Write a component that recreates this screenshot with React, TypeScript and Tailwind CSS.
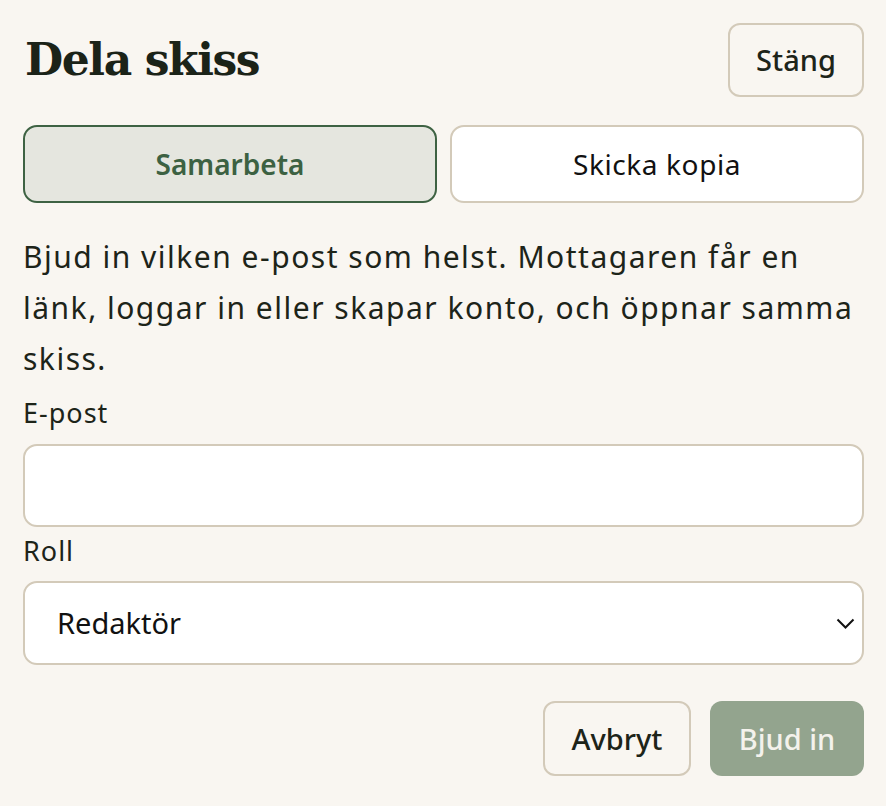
import React from "react";

export default function App() {
  const sans = "font-['Noto_Sans','Liberation_Sans',sans-serif]";
  return (
    <div className={`min-h-screen w-full bg-[#f9f6f1] text-[#1d2419] ${sans}`}>
      <div className="px-[23px] pr-[22px] pt-[23px]">
        <div className="flex items-center justify-between">
          <h1 className="pl-[2px] font-['DejaVu_Serif','Liberation_Serif',serif] text-[44px] font-bold tracking-[-1.4px] text-[#1b2318]">
            Dela skiss
          </h1>
          <button className="h-[74px] w-[136px] rounded-[12px] border-2 border-[#d3cab9] text-[29px] font-medium text-[#1d2419]">
            Stäng
          </button>
        </div>

        <div className="mt-[28px] grid grid-cols-2 gap-[13px]">
          <button className="h-[78px] rounded-[14px] border-2 border-[#3e6243] bg-[#e5e6df] text-[28px] font-semibold text-[#3c6142]">
            Samarbeta
          </button>
          <button className="h-[78px] rounded-[14px] border-2 border-[#d3cab9] bg-white text-[28px] tracking-[0.6px] text-[#111]">
            Skicka kopia
          </button>
        </div>

        <p className="mt-[28px] text-[30px] leading-[51px] tracking-[1.5px] text-[#1d2419]">
          Bjud in vilken e-post som helst. Mottagaren får en
          <br />
          länk, loggar in eller skapar konto, och öppnar samma
          <br />
          skiss.
        </p>

        <label className="mt-[11px] block text-[27px] leading-[36px] tracking-[1px]">E-post</label>
        <input
          type="email"
          className="mt-[13px] block h-[83px] w-full rounded-[14px] border-2 border-[#d3cab9] bg-white px-[32px] text-[29px] outline-none"
        />

        <label className="mt-[6px] block text-[27px] leading-[36px] tracking-[1px]">Roll</label>
        <div className="relative mt-[12px]">
          <div className="flex h-[84px] w-full items-center rounded-[14px] border-2 border-[#d3cab9] bg-white pl-[32px] text-[29px] text-[#111]">
            Redaktör
          </div>
          <svg
            className="pointer-events-none absolute right-[9px] top-[37px]"
            width="19"
            height="12"
            viewBox="0 0 19 12"
            fill="none"
          >
            <path d="M1.5 1.5 L9.5 9.5 L17.5 1.5" stroke="#111" strokeWidth="2" />
          </svg>
        </div>

        <div className="mt-[36px] flex justify-end gap-[19px]">
          <button className="h-[75px] w-[148px] rounded-[12px] border-2 border-[#d3cab9] text-[29px] font-medium text-[#1d2419]">
            Avbryt
          </button>
          <button className="h-[75px] w-[154px] rounded-[12px] bg-[#93a48e] text-[29px] font-medium text-[#f4f2ec]">
            Bjud in
          </button>
        </div>
      </div>
    </div>
  );
}
